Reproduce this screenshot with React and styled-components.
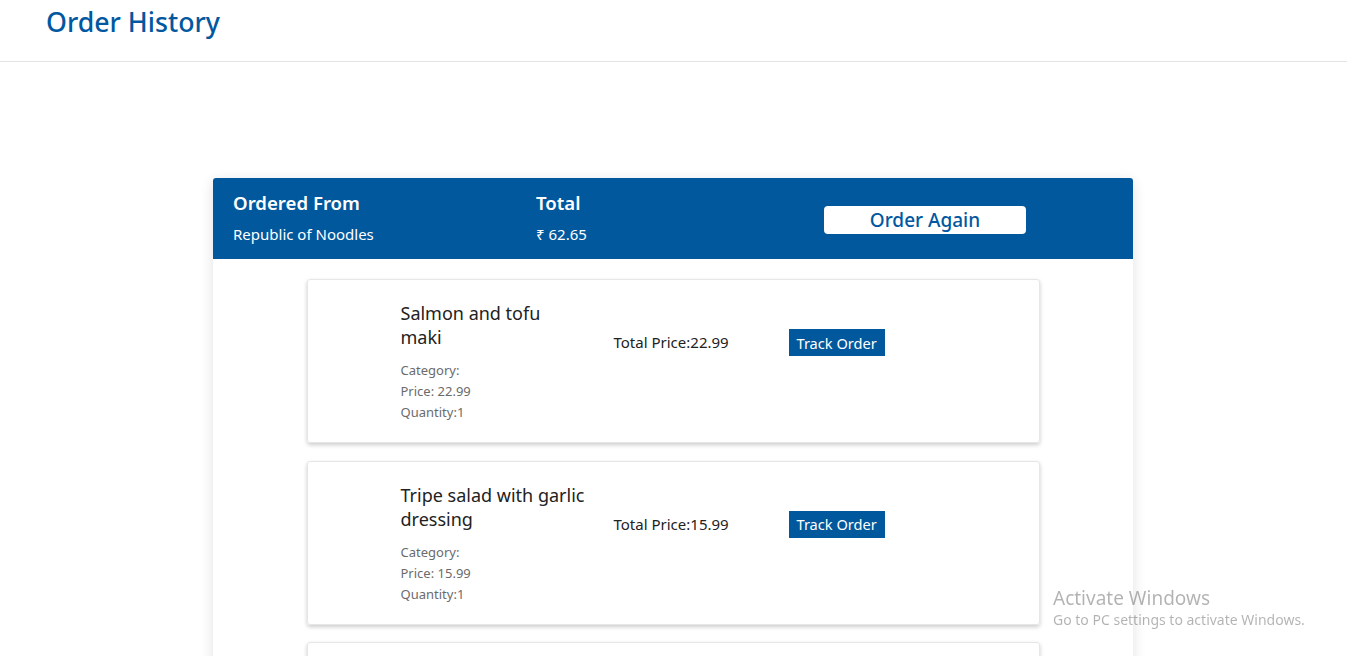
import React from "react";
import styled, { createGlobalStyle } from "styled-components";

const orders = [
  { name: "Salmon and tofu maki", category: "", price: "22.99", qty: 1 },
  { name: "Tripe salad with garlic dressing", category: "", price: "15.99", qty: 1 },
  { name: "Miso ramen", category: "", price: "23.67", qty: 1 },
];

const App = () => (
  <>
    <GlobalStyle />
    <TopBar>
      <PageTitle>Order History</PageTitle>
    </TopBar>
    <Main>
      <OrderCard>
        <OrderHeader>
          <HeaderCol>
            <HeaderLabel>Ordered From</HeaderLabel>
            <HeaderValue>Republic of Noodles</HeaderValue>
          </HeaderCol>
          <HeaderCol>
            <HeaderLabel>Total</HeaderLabel>
            <HeaderValue>₹ 62.65</HeaderValue>
          </HeaderCol>
          <AgainCol>
            <AgainButton>Order Again</AgainButton>
          </AgainCol>
        </OrderHeader>
        <ItemList>
          {orders.map((item, i) => (
            <ItemCard key={i}>
              <Details>
                <ItemName>{item.name}</ItemName>
                <Meta>
                  <div>Category:{item.category}</div>
                  <div>Price: {item.price}</div>
                  <div>Quantity:{item.qty}</div>
                </Meta>
              </Details>
              <TotalPrice>Total Price:{item.price}</TotalPrice>
              <div>
                <TrackButton>Track Order</TrackButton>
              </div>
            </ItemCard>
          ))}
        </ItemList>
      </OrderCard>
    </Main>
    <Watermark>
      <WatermarkTitle>Activate Windows</WatermarkTitle>
      <div>Go to PC settings to activate Windows.</div>
    </Watermark>
  </>
);

const GlobalStyle = createGlobalStyle`
  body {
    margin: 0;
    background: white;
    font-family: "Noto Sans", "Open Sans", sans-serif;
    color: #222;
    overflow: hidden;
  }
`;

const TopBar = styled.header`
  height: 62px;
  border-bottom: 1px solid #e3e3e3;
  padding: 0 46px;
  box-sizing: border-box;
`;

const PageTitle = styled.h1`
  margin: 0;
  padding-top: 4px;
  font-size: 26.7px;
  font-weight: 500;
  line-height: 36px;
  color: #0158a0;
`;

const Main = styled.main`
  display: flex;
  justify-content: center;
  padding-top: 116px;
  padding-right: 1px;
`;

const OrderCard = styled.section`
  width: 920px;
  border-radius: 3px;
  background: white;
  box-shadow: 0 3px 14px rgba(0, 0, 0, 0.12);
  overflow: hidden;
`;

const OrderHeader = styled.div`
  background: #01589d;
  color: white;
  height: 81px;
  display: grid;
  grid-template-columns: 303px 250px 1fr;
  align-items: center;
  padding-left: 20px;
  box-sizing: border-box;
`;

const HeaderCol = styled.div`
  display: flex;
  flex-direction: column;
  gap: 9px;
  padding-bottom: 3px;
`;

const HeaderLabel = styled.div`
  font-size: 18.6px;
  font-weight: 600;
  line-height: 24px;
`;

const HeaderValue = styled.div`
  font-size: 15px;
  line-height: 20px;
`;

const AgainCol = styled.div`
  padding-left: 38px;
  padding-top: 3px;
`;

const AgainButton = styled.button`
  width: 202px;
  height: 28px;
  border: none;
  border-radius: 4px;
  background: white;
  color: #0158a0;
  font-family: inherit;
  font-size: 19px;
  font-weight: 500;
  padding: 0;
  cursor: pointer;
`;

const ItemList = styled.div`
  display: flex;
  flex-direction: column;
  align-items: center;
  gap: 17.5px;
  padding: 20px 0 40px;
`;

const ItemCard = styled.div`
  width: 733px;
  height: 164px;
  box-sizing: border-box;
  border: 1px solid #e6e6e6;
  border-radius: 3px;
  box-shadow: 0 2px 4px rgba(0, 0, 0, 0.2);
  display: grid;
  grid-template-columns: 213px 175px auto;
  padding: 21px 0 0 93px;
`;

const Details = styled.div`
  display: flex;
  flex-direction: column;
  gap: 11px;
`;

const ItemName = styled.div`
  font-size: 18px;
  line-height: 24px;
  color: #222;
  width: 185.5px;
`;

const Meta = styled.div`
  font-size: 13px;
  line-height: 21px;
  color: #6b6b6b;
`;

const TotalPrice = styled.div`
  font-size: 15px;
  line-height: 20px;
  color: #222;
  margin-top: 31px;
`;

const TrackButton = styled.button`
  margin-top: 28px;
  height: 27px;
  padding: 0 8px;
  border: none;
  border-radius: 0;
  background: #01589d;
  color: white;
  font-family: inherit;
  font-size: 14.6px;
  cursor: pointer;
`;

const Watermark = styled.div`
  position: fixed;
  left: 1053px;
  top: 586px;
  color: rgba(0, 0, 0, 0.3);
  font-size: 14px;
  line-height: 20px;
  pointer-events: none;
`;

const WatermarkTitle = styled.div`
  font-size: 19px;
  line-height: 24px;
`;

export default App;
